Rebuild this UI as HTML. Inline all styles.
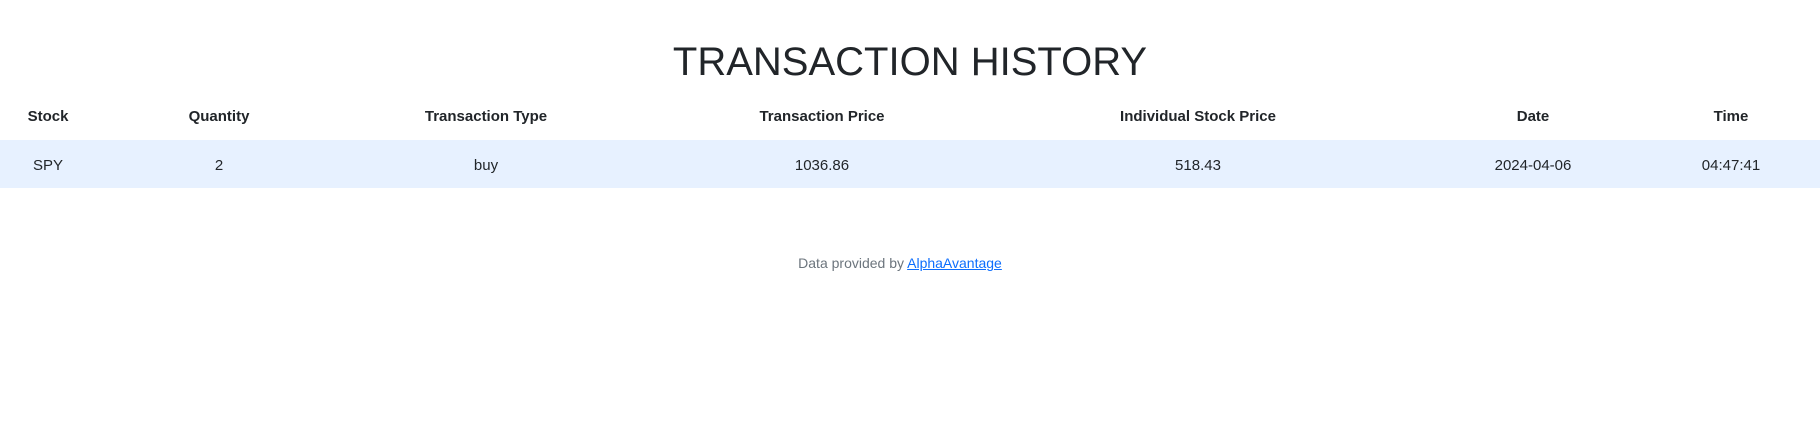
<!DOCTYPE html>
<html><head><meta charset="utf-8"><style>
html,body{margin:0;padding:0;background:#fff;width:1820px;height:440px;overflow:hidden;font-family:"Liberation Sans",sans-serif;color:#212529}
.t{position:absolute;left:0;width:1820px;top:38px;text-align:center;font-size:40px;line-height:48px;font-weight:normal}
.row{position:absolute;left:0;width:1820px}
.h{top:104px;height:26px;font-weight:bold;font-size:15px}
.b{top:140px;height:48px;background:#e7f1ff;font-size:15px}
.c{position:absolute;width:300px;margin-left:-150px;text-align:center;line-height:26px}
.b .c{line-height:48px;top:2px}
.f{position:absolute;top:255px;left:-10px;width:1820px;text-align:center;font-size:14px;color:#6c757d;line-height:16px}
.f a{color:#0d6efd;text-decoration:underline}
</style></head><body>
<div class="t">TRANSACTION HISTORY</div>
<div class="row h">
<div class="c" style="left:48px">Stock</div>
<div class="c" style="left:219px">Quantity</div>
<div class="c" style="left:486px">Transaction Type</div>
<div class="c" style="left:822px">Transaction Price</div>
<div class="c" style="left:1198px">Individual Stock Price</div>
<div class="c" style="left:1533px">Date</div>
<div class="c" style="left:1731px">Time</div>
</div>
<div class="row b">
<div class="c" style="left:48px">SPY</div>
<div class="c" style="left:219px">2</div>
<div class="c" style="left:486px">buy</div>
<div class="c" style="left:822px">1036.86</div>
<div class="c" style="left:1198px">518.43</div>
<div class="c" style="left:1533px">2024-04-06</div>
<div class="c" style="left:1731px">04:47:41</div>
</div>
<div class="f">Data provided by <a>AlphaAvantage</a></div>
</body></html>
